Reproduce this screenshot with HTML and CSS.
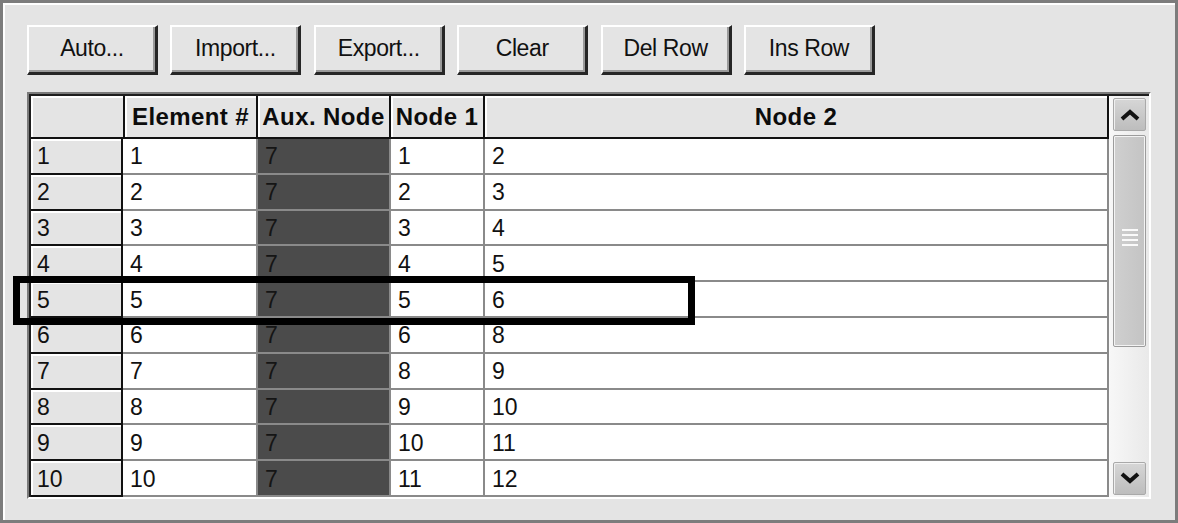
FILE: index.html
```html
<!DOCTYPE html>
<html>
<head>
<meta charset="utf-8">
<link rel="stylesheet" href="styles.css">
</head>
<body>
<div class="panel">
  <div class="toolbar">
    <div class="btn">Auto...</div>
    <div class="btn">Import...</div>
    <div class="btn">Export...</div>
    <div class="btn">Clear</div>
    <div class="btn">Del Row</div>
    <div class="btn">Ins Row</div>
  </div>
  <div class="grid-frame">
    <div class="grid-inner">
      <div class="table">
        <div class="hd"></div>
        <div class="hd">Element #</div>
        <div class="hd">Aux. Node</div>
        <div class="hd">Node 1</div>
        <div class="hd">Node 2</div>

        <div class="rh">1</div><div class="c">1</div><div class="c aux">7</div><div class="c">1</div><div class="c">2</div>
        <div class="rh">2</div><div class="c">2</div><div class="c aux">7</div><div class="c">2</div><div class="c">3</div>
        <div class="rh">3</div><div class="c">3</div><div class="c aux">7</div><div class="c">3</div><div class="c">4</div>
        <div class="rh">4</div><div class="c">4</div><div class="c aux">7</div><div class="c">4</div><div class="c">5</div>
        <div class="rh">5</div><div class="c">5</div><div class="c aux">7</div><div class="c">5</div><div class="c">6</div>
        <div class="rh">6</div><div class="c">6</div><div class="c aux">7</div><div class="c">6</div><div class="c">8</div>
        <div class="rh">7</div><div class="c">7</div><div class="c aux">7</div><div class="c">8</div><div class="c">9</div>
        <div class="rh">8</div><div class="c">8</div><div class="c aux">7</div><div class="c">9</div><div class="c">10</div>
        <div class="rh">9</div><div class="c">9</div><div class="c aux">7</div><div class="c">10</div><div class="c">11</div>
        <div class="rh">10</div><div class="c">10</div><div class="c aux">7</div><div class="c">11</div><div class="c">12</div>
      </div>
      <div class="scrollbar">
        <div class="sb-btn">
          <svg width="22" height="14" viewBox="0 0 22 14"><polyline points="3,11 11,4 19,11" fill="none" stroke="#111" stroke-width="4"/></svg>
        </div>
        <div class="thumb">
          <div class="grip"><span></span><span></span><span></span><span></span></div>
        </div>
        <div class="track"></div>
        <div class="sb-btn">
          <svg width="22" height="14" viewBox="0 0 22 14"><polyline points="3,3 11,10 19,3" fill="none" stroke="#111" stroke-width="4"/></svg>
        </div>
      </div>
    </div>
  </div>
  <div class="highlight"></div>
</div>
</body>
</html>
```

FILE: styles.css
```css
html, body {
  margin: 0;
  padding: 0;
  background: #e4e4e4;
}
body {
  font-family: "Liberation Sans", Arial, sans-serif;
  color: #111;
}
.panel {
  position: relative;
  box-sizing: border-box;
  width: 1178px;
  height: 523px;
  border: 3px solid #7c7c7c;
  box-shadow: inset 2px 2px 0 #fff;
  padding: 22px 0 0 24px;
}
.toolbar {
  display: flex;
  gap: 12.4px;
}
.btn {
  box-sizing: border-box;
  width: 131px;
  height: 50px;
  background: #e4e4e4;
  border-top: 2px solid #fff;
  border-left: 2px solid #fff;
  border-right: 3px solid #262626;
  border-bottom: 3px solid #262626;
  box-shadow: inset -2px -2px 0 #9a9a9a;
  display: flex;
  align-items: center;
  justify-content: center;
  font-size: 23px;
  letter-spacing: -0.4px;
  padding-bottom: 2px;
}
.grid-frame {
  margin-top: 17px;
  width: 1124px;
  box-sizing: border-box;
  border-style: solid;
  border-width: 2px;
  border-color: #7a7a7a #fff #fff #7a7a7a;
}
.grid-inner {
  display: flex;
  border-top: 2px solid #1e1e1e;
  border-left: 2px solid #1e1e1e;
}
.table {
  display: grid;
  grid-template-columns: 94px 133px 133px 94px 624px;
  grid-template-rows: 43px repeat(10, 35.8px);
  background: #fff;
}
.hd, .rh {
  box-sizing: border-box;
  background: #e4e4e4;
  border-right: 2px solid #111;
  border-bottom: 2px solid #111;
  box-shadow: inset 2px 2px 0 #fff;
  display: flex;
  align-items: center;
  font-size: 23px;
}
.hd {
  justify-content: center;
  font-weight: bold;
  font-size: 24px;
  letter-spacing: 0.4px;
  white-space: nowrap;
  overflow: hidden;
  color: #0c0c0c;
}
.rh {
  padding-left: 6px;
  margin-right: 2px;
  padding-top: 2px;
}
.c {
  box-sizing: border-box;
  background: #fff;
  border-right: 2px solid #8a8a8a;
  border-bottom: 2px solid #8a8a8a;
  display: flex;
  align-items: center;
  padding-left: 7px;
  padding-top: 2px;
  font-size: 23px;
}
.rh + .c {
  margin-left: -2px;
}
.c.aux {
  background: #4b4b4b;
  color: #151515;
}
.scrollbar {
  width: 40px;
  box-sizing: border-box;
  padding: 2px 3px 2px 3px;
  display: flex;
  flex-direction: column;
  background: linear-gradient(to right, #f7f7f7, #e9e9e9);
  border-left: 1px solid #fafafa;
}
.sb-btn {
  height: 33px;
  box-sizing: border-box;
  background: linear-gradient(#d6d6d6, #bdbdbd);
  border: 1px solid #a9a9a9;
  box-shadow: inset 1px 1px 0 #efefef;
  border-radius: 2px;
  display: flex;
  align-items: center;
  justify-content: center;
}
.thumb {
  margin-top: 4px;
  height: 212px;
  box-sizing: border-box;
  background: linear-gradient(to right, #cfcfcf, #c4c4c4);
  border: 2px solid #f3f3f3;
  outline: 1px solid #9c9c9c;
  outline-offset: -1px;
  border-radius: 2px;
  display: flex;
  align-items: center;
  justify-content: center;
}
.grip {
  display: flex;
  flex-direction: column;
  gap: 3px;
  margin-top: -8px;
}
.grip span {
  display: block;
  width: 16px;
  height: 2px;
  background: #fafafa;
}
.track {
  flex: 1;
}
.highlight {
  position: absolute;
  left: 10px;
  top: 273px;
  width: 682px;
  height: 49px;
  box-sizing: border-box;
  border: 7px solid #000;
}
```
